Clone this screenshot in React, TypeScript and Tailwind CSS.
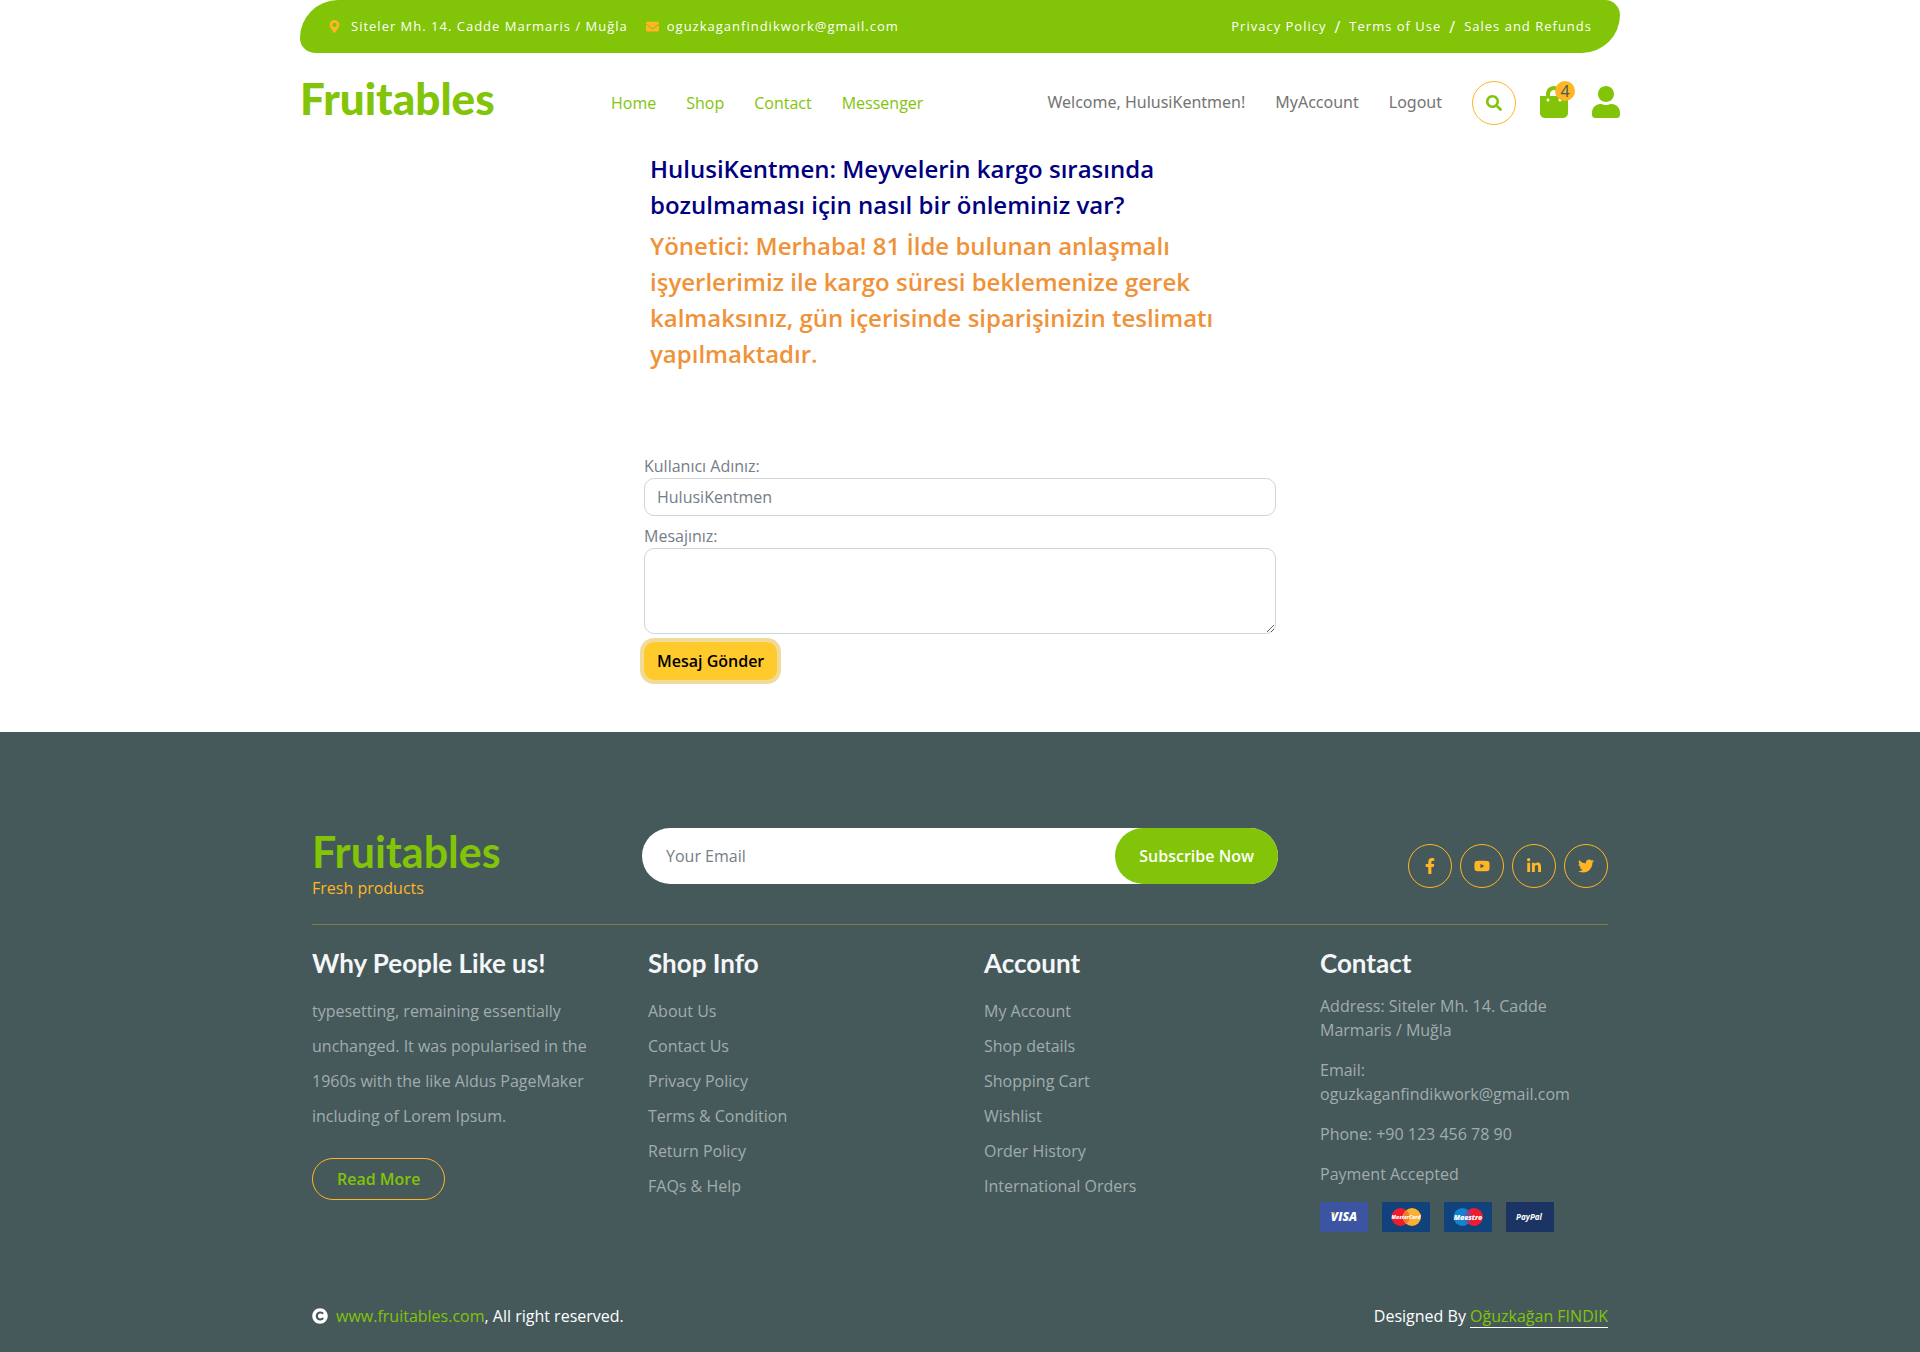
import React from "react";
import {
  FaCopyright,
  FaEnvelope,
  FaFacebookF,
  FaLinkedinIn,
  FaMapMarkerAlt,
  FaSearch,
  FaShoppingBag,
  FaTwitter,
  FaUser,
  FaYoutube,
} from "react-icons/fa";

const navLinks = ["Home", "Shop", "Contact", "Messenger"];
const policyLinks = ["Privacy Policy", "Terms of Use", "Sales and Refunds"];
const shopLinks = ["About Us", "Contact Us", "Privacy Policy", "Terms & Condition", "Return Policy", "FAQs & Help"];
const accountLinks = ["My Account", "Shop details", "Shopping Cart", "Wishlist", "Order History", "International Orders"];
const socials = [
  { name: "Facebook", Icon: FaFacebookF },
  { name: "YouTube", Icon: FaYoutube },
  { name: "LinkedIn", Icon: FaLinkedinIn },
  { name: "Twitter", Icon: FaTwitter },
];

function TopBar() {
  return (
    <div className="flex h-[53px] flex-wrap items-center justify-between rounded-tl-[38px] rounded-tr-[15px] rounded-br-[38px] rounded-bl-[15px] bg-[#81c408] px-7 text-[13px] font-medium tracking-[1px] text-white">
      <div className="flex items-center">
        <FaMapMarkerAlt className="mr-2.5 text-[#ffb524]" />
        <a href="#address">Siteler Mh. 14. Cadde Marmaris / Muğla</a>
        <FaEnvelope className="mr-2 ml-[18px] text-[#ffb524]" />
        <a href="#email">oguzkaganfindikwork@gmail.com</a>
      </div>
      <div className="flex items-center gap-2">
        {policyLinks.map((label, i) => (
          <React.Fragment key={label}>
            {i > 0 && <span className="text-base leading-5">/</span>}
            <a href="#policy">{label}</a>
          </React.Fragment>
        ))}
      </div>
    </div>
  );
}

function Navbar() {
  return (
    <nav className="flex h-[98px] items-center justify-between">
      <a href="#home" className="w-[311px] pb-2 font-['Lato'] text-[44px] leading-12 font-black text-[#81c408]">
        Fruitables
      </a>
      <div className="flex flex-1 gap-[30px] pt-0.5 text-[#81c408]">
        {navLinks.map((label) => (
          <a key={label} href="#nav">{label}</a>
        ))}
      </div>
      <div className="flex items-center">
        <div className="flex gap-[30px] font-['Noto_Sans'] text-[#747474]">
          <span>Welcome, HulusiKentmen!</span>
          <a href="#account">MyAccount</a>
          <a href="#logout">Logout</a>
        </div>
        <button aria-label="Search" className="mt-0.5 ml-[30px] flex size-11 items-center justify-center rounded-full border border-[#ffb524] text-[#81c408]">
          <FaSearch />
        </button>
        <a href="#cart" aria-label="Cart" className="relative ml-6 text-[32px] text-[#81c408]">
          <FaShoppingBag className="w-7" />
          <span className="absolute -top-[5px] left-[15px] flex size-5 items-center justify-center rounded-full bg-[#ffb524] text-base leading-5 text-[#45595b]">
            4
          </span>
        </a>
        <a href="#user" aria-label="User" className="ml-6 text-[32px] text-[#81c408]">
          <FaUser className="w-7" />
        </a>
      </div>
    </nav>
  );
}

function Messenger() {
  return (
    <main className="mx-auto w-full max-w-[632px] pb-[52px]">
      <div className="flex flex-col gap-[5px] px-1.5 text-2xl leading-9 font-semibold">
        <p className="text-[#000080]">
          HulusiKentmen: Meyvelerin kargo sırasında bozulmaması için nasıl bir önleminiz var?
        </p>
        <p className="text-[#f09238]">
          Yönetici: Merhaba! 81 İlde bulunan anlaşmalı işyerlerimiz ile kargo süresi beklemenize gerek
          kalmaksınız, gün içerisinde siparişinizin teslimatı yapılmaktadır.
        </p>
      </div>
      <form className="mt-[82px] text-[#747d88]">
        <label htmlFor="user" className="block">Kullanıcı Adınız:</label>
        <input
          id="user"
          placeholder="HulusiKentmen"
          className="block h-[38px] w-full rounded-[10px] border border-[#ced4da] px-3 placeholder:text-[#747d88]"
        />
        <label htmlFor="message" className="mt-2 block">Mesajınız:</label>
        <textarea id="message" rows={3} className="block w-full rounded-[10px] border border-[#ced4da] px-3 py-1.5" />
        <button type="button" className="mt-2 h-[38px] rounded-[10px] bg-[#ffca2c] px-[13px] font-semibold text-black ring-4 ring-[#d9a406]/40">
          Mesaj Gönder
        </button>
      </form>
    </main>
  );
}

function Card({ bg, children }: { bg: string; children: React.ReactNode }) {
  return (
    <svg width="48" height="30" viewBox="0 0 48 30" fontFamily="Open Sans, sans-serif" textAnchor="middle" fill="white">
      <rect width="48" height="30" rx="1" fill={bg} />
      {children}
    </svg>
  );
}

function PaymentCards() {
  return (
    <div className="flex gap-3.5 pt-4">
      <Card bg="#3b55a3">
        <text x="24" y="19" fontSize="12" fontWeight="800" fontStyle="italic">VISA</text>
        <path d="M10 10h4l2 5c-1-2-3-4-6-5z" fill="#e8b04a" />
      </Card>
      <Card bg="#12427b">
        <circle cx="18.500" cy="15" r="9" fill="#ed1c2e" />
        <circle cx="30" cy="15" r="9" fill="#fbb034" />
        <path d="M24.250 8a9 9 0 0 1 0 14a9 9 0 0 1 0-14z" fill="#f47b29" />
        <text x="24" y="17" fontSize="5" fontWeight="800" fontStyle="italic">MasterCard</text>
      </Card>
      <Card bg="#12427b">
        <circle cx="18.500" cy="15" r="9" fill="#1284cf" />
        <circle cx="30" cy="15" r="9" fill="#ed1c2e" />
        <path d="M24.250 8a9 9 0 0 1 0 14a9 9 0 0 1 0-14z" fill="#7b4a94" />
        <text x="24" y="18" fontSize="7" fontWeight="800" fontStyle="italic">Maestro</text>
      </Card>
      <Card bg="#1b3463">
        <text x="23" y="18" fontSize="8" fontWeight="700" fontStyle="italic">PayPal</text>
      </Card>
    </div>
  );
}

function FooterHeading({ children }: { children: React.ReactNode }) {
  return <h4 className="pb-px font-['Lato'] text-[26px] leading-7 font-bold text-[#f4f6f8]">{children}</h4>;
}

function LinkColumn({ title, links }: { title: string; links: string[] }) {
  return (
    <div>
      <FooterHeading>{title}</FooterHeading>
      <ul className="mt-4 leading-[35px]">
        {links.map((label) => (
          <li key={label}><a href="#footer">{label}</a></li>
        ))}
      </ul>
    </div>
  );
}

function Footer() {
  return (
    <footer className="bg-[#45595b] pt-24 pb-6">
      <div className="mx-auto max-w-[1320px] px-3">
        <div className="grid grid-cols-[1fr_2fr_1fr] gap-6 border-b border-[#ffb524]/35 pb-6">
          <a href="#home" className="block">
            <span className="block font-['Lato'] text-[43px] leading-12 font-bold text-[#81c408]">Fruitables</span>
            <span className="block text-[#ffb524]">Fresh products</span>
          </a>
          <div className="-mx-1.5 flex h-14 rounded-full bg-white">
            <input aria-label="Your Email" placeholder="Your Email" className="min-w-0 flex-1 rounded-full px-6 placeholder:text-[#747d88]" />
            <button className="rounded-full bg-[#81c408] px-6 font-semibold text-white">Subscribe Now</button>
          </div>
          <div className="flex justify-end gap-2 pt-4">
            {socials.map(({ name, Icon }) => (
              <a key={name} href="#social" aria-label={name} className="flex size-11 items-center justify-center rounded-full border border-[#ffb524] text-[#ffb524]">
                <Icon />
              </a>
            ))}
          </div>
        </div>
        <div className="grid grid-cols-4 gap-12 pt-6 text-[#a2acad]">
          <div>
            <FooterHeading>Why People Like us!</FooterHeading>
            <p className="mt-4 mb-6 leading-[35px]">
              typesetting, remaining essentially unchanged. It was popularised in the 1960s with the like Aldus
              PageMaker including of Lorem Ipsum.
            </p>
            <a href="#more" className="inline-block rounded-full border border-[#ffb524] px-6 py-2 font-semibold text-[#81c408]">
              Read More
            </a>
          </div>
          <LinkColumn title="Shop Info" links={shopLinks} />
          <LinkColumn title="Account" links={accountLinks} />
          <div>
            <FooterHeading>Contact</FooterHeading>
            <div className="mt-4 flex flex-col gap-4">
              <p>Address: Siteler Mh. 14. Cadde Marmaris / Muğla</p>
              <p>Email: oguzkaganfindikwork@gmail.com</p>
              <p>Phone: +90 123 456 78 90</p>
              <p>Payment Accepted</p>
            </div>
            <PaymentCards />
          </div>
        </div>
        <div className="mt-[72px] flex items-center justify-between text-white">
          <div className="flex items-center">
            <FaCopyright className="mr-2" />
            <span><a href="#site" className="text-[#81c408]">www.fruitables.com</a>, All right reserved.</span>
          </div>
          <div>
            Designed By <a href="#author" className="border-b border-white text-[#81c408]">Oğuzkağan FINDIK</a>
          </div>
        </div>
      </div>
    </footer>
  );
}

export default function App() {
  return (
    <div className="flex min-h-screen flex-col bg-white font-['Open_Sans',sans-serif] text-base">
      <header className="mx-auto w-full max-w-[1320px]">
        <TopBar />
        <Navbar />
      </header>
      <Messenger />
      <Footer />
    </div>
  );
}
